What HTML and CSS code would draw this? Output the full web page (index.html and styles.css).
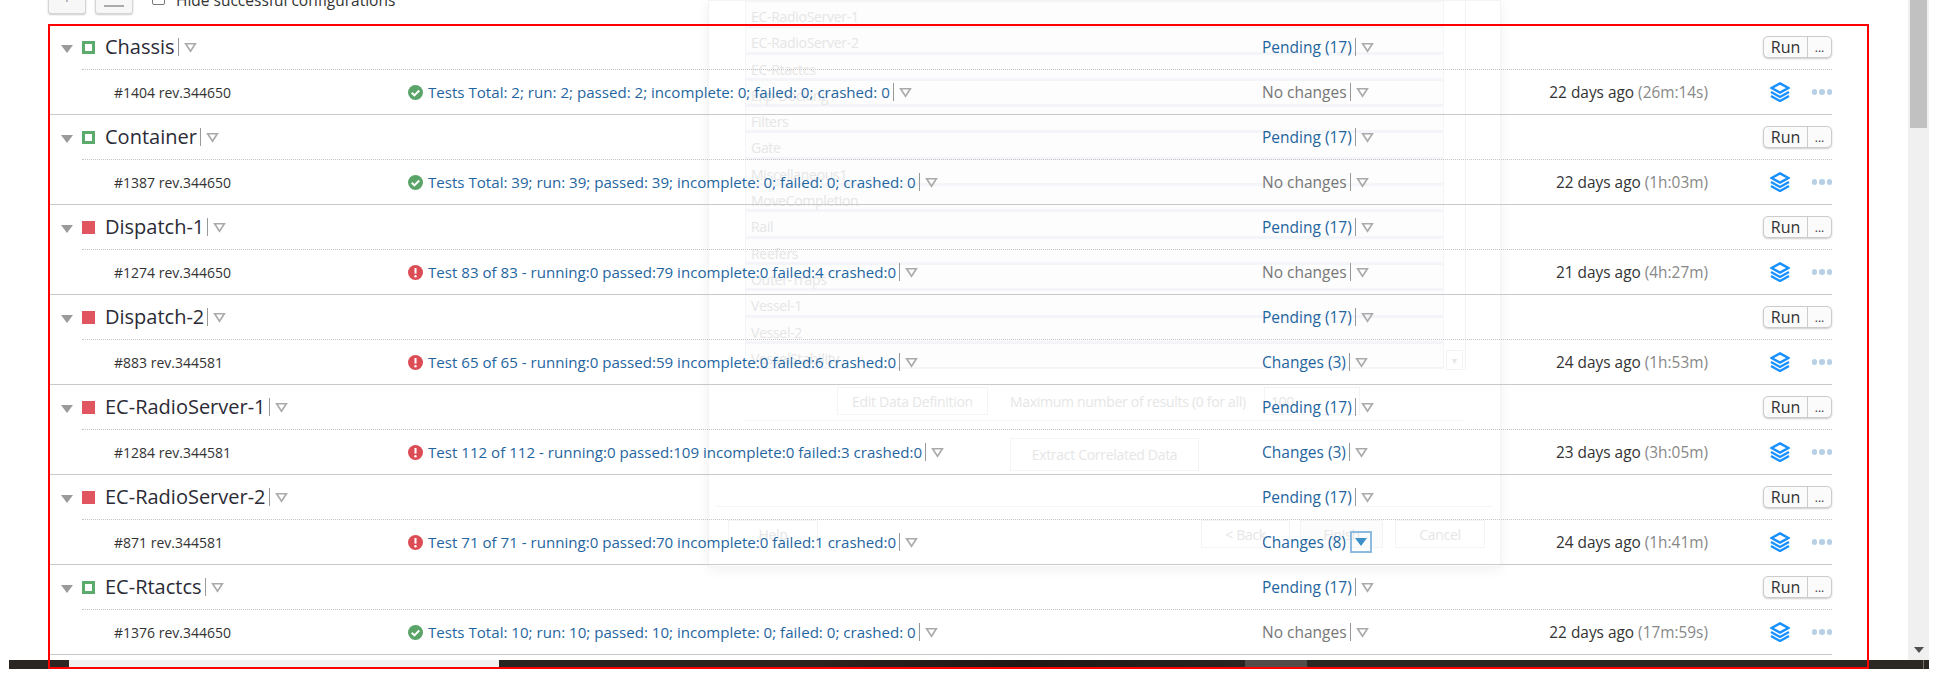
FILE: index.html
```html
<!DOCTYPE html>
<html>
<head>
    <title>Build Configurations</title>
    <link rel="stylesheet" href="styles.css">
</head>
<body>
    <svg class="defs" width="0" height="0">
        <symbol id="caret" viewBox="0 0 12 10"><path d="M1.5 1.5h9L6 8.5z" fill="none" stroke="#aaa" stroke-width="1.5"/></symbol>
        <symbol id="ok" viewBox="0 0 16 16"><circle cx="8" cy="8" r="8" fill="#5aa469"/><path d="M4 8.3l2.8 2.8L12 5.8" fill="none" stroke="#fff" stroke-width="2.2"/></symbol>
        <symbol id="bad" viewBox="0 0 16 16"><circle cx="8" cy="8" r="8" fill="#dc4c55"/><path d="M8 3.2v6" stroke="#fff" stroke-width="2.2"/><circle cx="8" cy="12" r="1.3" fill="#fff"/></symbol>
        <symbol id="layers" viewBox="0 0 20 20"><path d="M10 1.4L18.4 6 10 10.6 1.6 6z" fill="none" stroke="#1890ff" stroke-width="2.4"/><path d="M1 10l9 5 9-5M1 14l9 5 9-5" fill="none" stroke="#1890ff" stroke-width="2.4"/></symbol>
    </svg>

    <div class="screen">
        <div class="content">
            <div class="ghost-dialog">
                <div class="ghost-list">
                    <div class="ghost-rows">
                        <div class="ghost-row">EC-RadioServer-1</div>
                        <div class="ghost-row">EC-RadioServer-2</div>
                        <div class="ghost-row">EC-Rtactcs</div>
                        <div class="ghost-row">Exp-Docking</div>
                        <div class="ghost-row">Filters</div>
                        <div class="ghost-row">Gate</div>
                        <div class="ghost-row">Miscellaneous1</div>
                        <div class="ghost-row">MoveCompletion</div>
                        <div class="ghost-row">Rail</div>
                        <div class="ghost-row">Reefers</div>
                        <div class="ghost-row">Outer-Traps</div>
                        <div class="ghost-row">Vessel-1</div>
                        <div class="ghost-row">Vessel-2</div>
                        <div class="ghost-row">VesselStability</div>
                    </div>
                    <div class="ghost-scroll"><span class="ghost-arrow">&#9662;</span></div>
                </div>
                <div class="ghost-query">
                    <span class="ghost-btn ghost-edit">Edit Data Definition</span>
                    <span class="ghost-label">Maximum number of results (0 for all)</span>
                    <span class="ghost-btn ghost-input">100</span>
                </div>
                <div class="ghost-extract"><span class="ghost-btn ghost-wide">Extract Correlated Data</span></div>
                <div class="ghost-footer">
                    <span class="ghost-btn ghost-help">Help</span>
                    <span class="ghost-btn ghost-back">&lt; Back</span>
                    <span class="ghost-btn ghost-finish">Finish</span>
                    <span class="ghost-btn ghost-cancel">Cancel</span>
                </div>
            </div>

            <div class="toolbar">
                <span class="tool-btn"><span class="tool-plus">+</span></span>
                <span class="tool-btn"><span class="tool-bar"></span></span>
                <label class="hide-check"><span class="check-box"></span>Hide successful configurations</label>
            </div>

            <div class="group">
                <div class="toggle"></div>
                <div class="group-body">
                    <div class="head">
                        <div class="title"><span class="square square-ok"></span><span class="name">Chassis</span><span class="sep"></span><svg class="caret"><use href="#caret"/></svg></div>
                        <div class="pending"><span>Pending (17)</span><span class="sep"></span><svg class="caret"><use href="#caret"/></svg></div>
                        <div class="run-group"><span class="run">Run</span><span class="more">...</span></div>
                    </div>
                    <div class="build">
                        <div class="rev">#1404 rev.344650</div>
                        <div class="link"><svg class="status"><use href="#ok"/></svg><span>Tests Total: 2; run: 2; passed: 2; incomplete: 0; failed: 0; crashed: 0</span><span class="sep"></span><svg class="caret"><use href="#caret"/></svg></div>
                        <div class="changes none"><span>No changes</span><span class="sep"></span><svg class="caret"><use href="#caret"/></svg></div>
                        <div class="when">22 days ago <span class="took">(26m:14s)</span></div>
                        <div class="actions"><svg class="layers"><use href="#layers"/></svg><span class="dots"><i></i><i></i><i></i></span></div>
                    </div>
                </div>
            </div>

            <div class="group">
                <div class="toggle"></div>
                <div class="group-body">
                    <div class="head">
                        <div class="title"><span class="square square-ok"></span><span class="name">Container</span><span class="sep"></span><svg class="caret"><use href="#caret"/></svg></div>
                        <div class="pending"><span>Pending (17)</span><span class="sep"></span><svg class="caret"><use href="#caret"/></svg></div>
                        <div class="run-group"><span class="run">Run</span><span class="more">...</span></div>
                    </div>
                    <div class="build">
                        <div class="rev">#1387 rev.344650</div>
                        <div class="link"><svg class="status"><use href="#ok"/></svg><span>Tests Total: 39; run: 39; passed: 39; incomplete: 0; failed: 0; crashed: 0</span><span class="sep"></span><svg class="caret"><use href="#caret"/></svg></div>
                        <div class="changes none"><span>No changes</span><span class="sep"></span><svg class="caret"><use href="#caret"/></svg></div>
                        <div class="when">22 days ago <span class="took">(1h:03m)</span></div>
                        <div class="actions"><svg class="layers"><use href="#layers"/></svg><span class="dots"><i></i><i></i><i></i></span></div>
                    </div>
                </div>
            </div>

            <div class="group">
                <div class="toggle"></div>
                <div class="group-body">
                    <div class="head">
                        <div class="title"><span class="square square-bad"></span><span class="name">Dispatch-1</span><span class="sep"></span><svg class="caret"><use href="#caret"/></svg></div>
                        <div class="pending"><span>Pending (17)</span><span class="sep"></span><svg class="caret"><use href="#caret"/></svg></div>
                        <div class="run-group"><span class="run">Run</span><span class="more">...</span></div>
                    </div>
                    <div class="build">
                        <div class="rev">#1274 rev.344650</div>
                        <div class="link"><svg class="status"><use href="#bad"/></svg><span>Test 83 of 83 - running:0 passed:79 incomplete:0 failed:4 crashed:0</span><span class="sep"></span><svg class="caret"><use href="#caret"/></svg></div>
                        <div class="changes none"><span>No changes</span><span class="sep"></span><svg class="caret"><use href="#caret"/></svg></div>
                        <div class="when">21 days ago <span class="took">(4h:27m)</span></div>
                        <div class="actions"><svg class="layers"><use href="#layers"/></svg><span class="dots"><i></i><i></i><i></i></span></div>
                    </div>
                </div>
            </div>

            <div class="group">
                <div class="toggle"></div>
                <div class="group-body">
                    <div class="head">
                        <div class="title"><span class="square square-bad"></span><span class="name">Dispatch-2</span><span class="sep"></span><svg class="caret"><use href="#caret"/></svg></div>
                        <div class="pending"><span>Pending (17)</span><span class="sep"></span><svg class="caret"><use href="#caret"/></svg></div>
                        <div class="run-group"><span class="run">Run</span><span class="more">...</span></div>
                    </div>
                    <div class="build">
                        <div class="rev">#883 rev.344581</div>
                        <div class="link"><svg class="status"><use href="#bad"/></svg><span>Test 65 of 65 - running:0 passed:59 incomplete:0 failed:6 crashed:0</span><span class="sep"></span><svg class="caret"><use href="#caret"/></svg></div>
                        <div class="changes"><span>Changes (3)</span><span class="sep"></span><svg class="caret"><use href="#caret"/></svg></div>
                        <div class="when">24 days ago <span class="took">(1h:53m)</span></div>
                        <div class="actions"><svg class="layers"><use href="#layers"/></svg><span class="dots"><i></i><i></i><i></i></span></div>
                    </div>
                </div>
            </div>

            <div class="group">
                <div class="toggle"></div>
                <div class="group-body">
                    <div class="head">
                        <div class="title"><span class="square square-bad"></span><span class="name">EC-RadioServer-1</span><span class="sep"></span><svg class="caret"><use href="#caret"/></svg></div>
                        <div class="pending"><span>Pending (17)</span><span class="sep"></span><svg class="caret"><use href="#caret"/></svg></div>
                        <div class="run-group"><span class="run">Run</span><span class="more">...</span></div>
                    </div>
                    <div class="build">
                        <div class="rev">#1284 rev.344581</div>
                        <div class="link"><svg class="status"><use href="#bad"/></svg><span>Test 112 of 112 - running:0 passed:109 incomplete:0 failed:3 crashed:0</span><span class="sep"></span><svg class="caret"><use href="#caret"/></svg></div>
                        <div class="changes"><span>Changes (3)</span><span class="sep"></span><svg class="caret"><use href="#caret"/></svg></div>
                        <div class="when">23 days ago <span class="took">(3h:05m)</span></div>
                        <div class="actions"><svg class="layers"><use href="#layers"/></svg><span class="dots"><i></i><i></i><i></i></span></div>
                    </div>
                </div>
            </div>

            <div class="group">
                <div class="toggle"></div>
                <div class="group-body">
                    <div class="head">
                        <div class="title"><span class="square square-bad"></span><span class="name">EC-RadioServer-2</span><span class="sep"></span><svg class="caret"><use href="#caret"/></svg></div>
                        <div class="pending"><span>Pending (17)</span><span class="sep"></span><svg class="caret"><use href="#caret"/></svg></div>
                        <div class="run-group"><span class="run">Run</span><span class="more">...</span></div>
                    </div>
                    <div class="build">
                        <div class="rev">#871 rev.344581</div>
                        <div class="link"><svg class="status"><use href="#bad"/></svg><span>Test 71 of 71 - running:0 passed:70 incomplete:0 failed:1 crashed:0</span><span class="sep"></span><svg class="caret"><use href="#caret"/></svg></div>
                        <div class="changes"><span>Changes (8)</span><span class="caret-on"></span></div>
                        <div class="when">24 days ago <span class="took">(1h:41m)</span></div>
                        <div class="actions"><svg class="layers"><use href="#layers"/></svg><span class="dots"><i></i><i></i><i></i></span></div>
                    </div>
                </div>
            </div>

            <div class="group">
                <div class="toggle"></div>
                <div class="group-body">
                    <div class="head">
                        <div class="title"><span class="square square-ok"></span><span class="name">EC-Rtactcs</span><span class="sep"></span><svg class="caret"><use href="#caret"/></svg></div>
                        <div class="pending"><span>Pending (17)</span><span class="sep"></span><svg class="caret"><use href="#caret"/></svg></div>
                        <div class="run-group"><span class="run">Run</span><span class="more">...</span></div>
                    </div>
                    <div class="build">
                        <div class="rev">#1376 rev.344650</div>
                        <div class="link"><svg class="status"><use href="#ok"/></svg><span>Tests Total: 10; run: 10; passed: 10; incomplete: 0; failed: 0; crashed: 0</span><span class="sep"></span><svg class="caret"><use href="#caret"/></svg></div>
                        <div class="changes none"><span>No changes</span><span class="sep"></span><svg class="caret"><use href="#caret"/></svg></div>
                        <div class="when">22 days ago <span class="took">(17m:59s)</span></div>
                        <div class="actions"><svg class="layers"><use href="#layers"/></svg><span class="dots"><i></i><i></i><i></i></span></div>
                    </div>
                </div>
            </div>
        </div>

        <div class="scrollbar">
            <div class="scroll-thumb"></div>
            <div class="scroll-arrow"></div>
        </div>
    </div>

    <div class="taskbar">
        <div class="task task-dark-a"></div>
        <div class="task task-light"></div>
        <div class="task task-dark-b"></div>
        <div class="task task-grey"></div>
        <div class="task task-dark-c"></div>
        <div class="task task-tick"></div>
        <div class="task task-dark-d"></div>
    </div>

    <div class="red-frame"></div>
</body>
</html>
```

FILE: styles.css
```css
body {
    margin: 0;
    width: 1938px;
    height: 694px;
    overflow: hidden;
    position: relative;
    background-color: #ffffff;
    font-family: "Open Sans", sans-serif;
    font-size: 14px;
    color: #333333;
}

.defs {
    position: absolute;
}

.screen {
    display: flex;
    width: 1929px;
    height: 660px;
}

.content {
    flex: 1;
    position: relative;
    overflow: hidden;
}

/* faded dialog behind the list */
.ghost-dialog {
    position: absolute;
    left: 708px;
    top: 0;
    width: 793px;
    height: 567px;
    box-sizing: border-box;
    border: 1px solid #f4f4f4;
    box-shadow: 0 3px 12px rgba(0, 0, 0, 0.06);
    color: #e6e6e6;
}

.ghost-list {
    display: flex;
    margin-left: 36px;
    width: 721px;
    height: 369px;
    overflow: hidden;
}

.ghost-rows {
    width: 699px;
}

.ghost-row {
    height: 26.3px;
    line-height: 29px;
    box-sizing: border-box;
    padding-left: 5px;
    border: 1px solid #f3f5f8;
    border-bottom-width: 2px;
    background-color: #fdfdfd;
    letter-spacing: -0.3px;
}

.ghost-scroll {
    flex: 1;
    display: flex;
    align-items: flex-end;
    justify-content: center;
    border-right: 1px solid #f3f3f3;
}

.ghost-arrow {
    width: 15px;
    height: 18px;
    line-height: 18px;
    text-align: center;
    font-size: 10px;
    border: 1px solid #f3f3f3;
}

.ghost-btn {
    display: flex;
    align-items: center;
    justify-content: center;
    box-sizing: border-box;
    border: 1px solid #f4f4f4;
    letter-spacing: -0.3px;
}

.ghost-query {
    display: flex;
    align-items: center;
    margin: 17px 0 0 128px;
    height: 28px;
}

.ghost-edit {
    width: 151px;
    height: 28px;
}

.ghost-label {
    margin-left: 22px;
    letter-spacing: -0.3px;
}

.ghost-input {
    margin-left: 18px;
    width: 96px;
    height: 28px;
    justify-content: flex-start;
    padding-left: 6px;
}

.ghost-extract {
    margin: 5px 36px 0;
    padding: 17px 0 0 265px;
    border-top: 1px solid #f6f6f6;
}

.ghost-wide {
    width: 189px;
    height: 33px;
}

.ghost-footer {
    display: flex;
    margin: 35px 7px 0;
    padding: 13px 8px 0 12px;
    border-top: 1px solid #f6f6f6;
}

.ghost-help {
    width: 90px;
    height: 28px;
    margin-right: 383px;
}

.ghost-back {
    width: 89px;
    height: 28px;
    margin-right: 10px;
}

.ghost-finish {
    width: 83px;
    height: 28px;
    margin-right: 12px;
    background-color: #fcfcfc;
}

.ghost-cancel {
    width: 90px;
    height: 28px;
}

/* top toolbar, cut off by the window */
.toolbar {
    position: relative;
    display: flex;
    align-items: flex-end;
    height: 25px;
    padding: 0 0 11px 48px;
    box-sizing: border-box;
}

.tool-btn {
    flex: none;
    display: flex;
    align-items: center;
    justify-content: center;
    width: 38px;
    height: 26px;
    margin-right: 9px;
    border: 1px solid #d5d5d5;
    border-radius: 3px;
    box-sizing: border-box;
    background-color: #f7f7f7;
    box-shadow: 0 1px 2px rgba(0, 0, 0, 0.2);
    color: #999999;
}

.tool-plus {
    font-size: 18px;
    line-height: 18px;
    margin-top: -9px;
}

.tool-bar {
    width: 20px;
    height: 2px;
    margin-top: 10px;
    background-color: #aaaaaa;
}

.hide-check {
    display: flex;
    align-items: flex-end;
    margin-left: 10px;
    padding-bottom: 5px;
    font-size: 15.5px;
    line-height: 17px;
    white-space: nowrap;
}

.check-box {
    width: 13px;
    height: 13px;
    margin-right: 11px;
    margin-bottom: 4px;
    border: 1px solid #777777;
    border-radius: 2px;
    box-sizing: border-box;
}

.group {
    position: relative;
    display: grid;
    grid-template-columns: 33px 1fr;
    width: 1783px;
    margin-left: 49px;
    border-bottom: 1px solid #c9c9c9;
}

.toggle {
    width: 0;
    height: 0;
    margin: 20px 0 0 12px;
    border-left: 6.5px solid transparent;
    border-right: 6.5px solid transparent;
    border-top: 8px solid #9a9a9a;
}

.head {
    display: grid;
    grid-template-columns: 1180px 1fr auto;
    align-items: center;
    height: 45px;
    box-sizing: border-box;
    border-bottom: 1px dotted #c4c4c4;
}

.title {
    display: flex;
    align-items: center;
}

.square {
    width: 13px;
    height: 13px;
    margin-right: 10px;
    box-sizing: border-box;
}

.square-ok {
    border: 3px solid #5cab6d;
}

.square-bad {
    background-color: #e0555f;
}

.name {
    font-size: 20px;
    color: #2b2b36;
    line-height: 26px;
}

.sep {
    width: 1px;
    height: 18px;
    margin: 0 5px 0 3px;
    background-color: #999999;
}

.caret {
    width: 13px;
    height: 11px;
}

.pending {
    display: flex;
    align-items: center;
    color: #1f659f;
    font-size: 15.5px;
    white-space: nowrap;
}

.link {
    display: flex;
    align-items: center;
    color: #1f659f;
    font-size: 15.1px;
    white-space: nowrap;
}

.run-group {
    display: flex;
    height: 22px;
    border: 1px solid #cccccc;
    border-radius: 5px;
    box-sizing: border-box;
    background-color: #fbfbfb;
    box-shadow: 0 1px 2px rgba(0, 0, 0, 0.2);
    font-size: 16px;
    line-height: 20px;
}

.run {
    width: 44px;
    text-align: center;
    border-right: 1px solid #cccccc;
    box-sizing: border-box;
}

.more {
    width: 23px;
    text-align: center;
    font-size: 12px;
    line-height: 22px;
}

.build {
    display: grid;
    grid-template-columns: 294px 854px 200px 246px 124px;
    align-items: center;
    height: 44px;
    padding-left: 32px;
}

.rev {
    white-space: nowrap;
}

.status {
    width: 15px;
    height: 15px;
    margin-right: 5px;
}

.changes {
    display: flex;
    align-items: center;
    color: #1f659f;
    font-size: 15.5px;
    white-space: nowrap;
}

.changes.none {
    color: #777777;
}

.caret-on {
    display: flex;
    align-items: center;
    justify-content: center;
    width: 22px;
    height: 22px;
    margin: 0 0 0 4px;
    border: 2px solid #8dbbe0;
    box-sizing: border-box;
}

.caret-on::after {
    content: "";
    border-left: 6px solid transparent;
    border-right: 6px solid transparent;
    border-top: 8px solid #3f8fc9;
}

.when {
    text-align: right;
    font-size: 15.4px;
    white-space: nowrap;
}

.took {
    color: #888888;
}

.actions {
    display: flex;
    align-items: center;
    justify-content: space-between;
    padding-left: 62px;
}

.layers {
    width: 20px;
    height: 20px;
}

.dots {
    display: flex;
    gap: 2px;
}

.dots i {
    width: 5.5px;
    height: 5.5px;
    border-radius: 50%;
    background-color: #b8d0e6;
}

.scrollbar {
    width: 21px;
    display: flex;
    flex-direction: column;
    justify-content: space-between;
    align-items: center;
    background-color: #f0f0f0;
}

.scroll-thumb {
    width: 17px;
    height: 128px;
    background-color: #c1c1c1;
}

.scroll-arrow {
    margin-bottom: 7px;
    border-left: 5px solid transparent;
    border-right: 5px solid transparent;
    border-top: 6px solid #505050;
}

.taskbar {
    display: flex;
    width: 1920px;
    height: 9px;
    margin-left: 9px;
}

.task-dark-a {
    width: 60px;
    background-color: #2b2622;
}

.task-light {
    width: 430px;
    background-color: #f0f0f0;
}

.task-dark-b {
    width: 746px;
    background: linear-gradient(90deg, #2a2420, #2e2420 40%, #1f1816 70%, #2a2522);
}

.task-grey {
    width: 62px;
    background-color: #544c4a;
}

.task-dark-c {
    width: 616px;
    background-color: #2b2723;
}

.task-tick {
    width: 1px;
    background-color: #77726e;
}

.task-dark-d {
    flex: 1;
    background-color: #2b2723;
}

/* red marker drawn over the screenshot */
.red-frame {
    position: absolute;
    left: 48px;
    top: 24px;
    width: 1821px;
    height: 645px;
    box-sizing: border-box;
    border: 2px solid #ff0000;
}
```
